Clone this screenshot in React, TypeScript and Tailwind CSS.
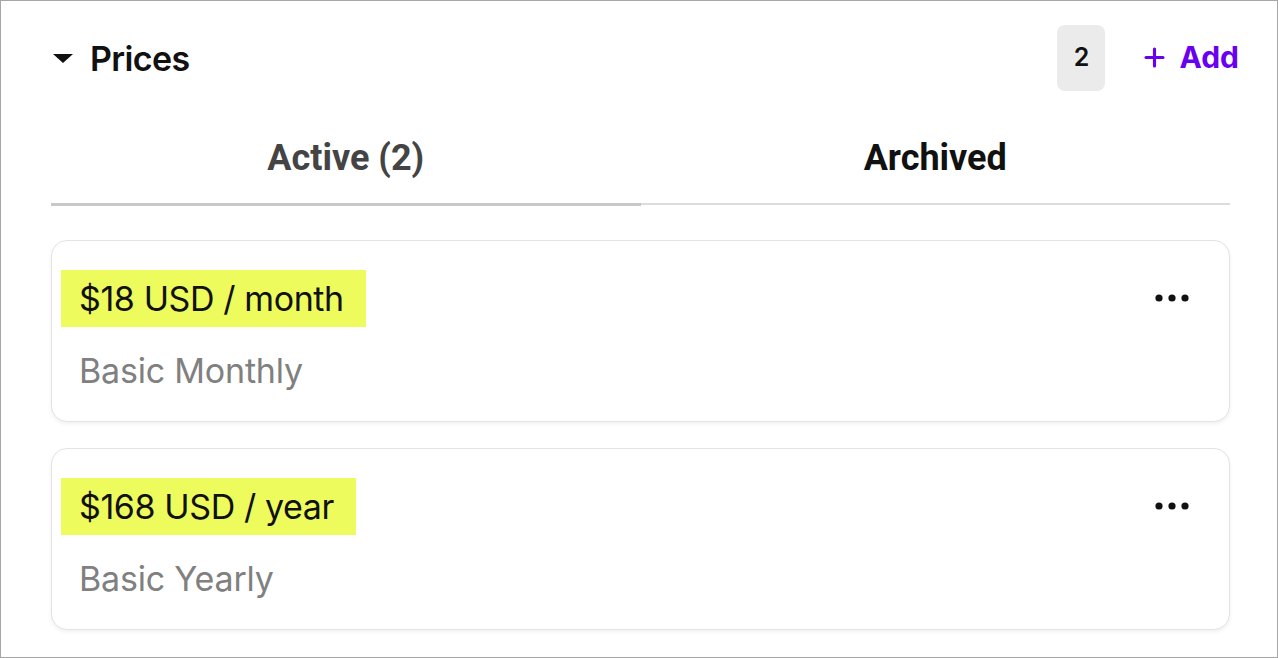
import { Plus } from "lucide-react"

const prices = [
  { id: "monthly", amount: "$18 USD / month", name: "Basic Monthly" },
  { id: "yearly", amount: "$168 USD / year", name: "Basic Yearly" },
]

function Dots() {
  return (
    <svg width="34" height="8" viewBox="0 0 34 8" aria-hidden="true">
      <circle cx="4" cy="4" r="3.6" fill="#111" />
      <circle cx="17" cy="4" r="3.6" fill="#111" />
      <circle cx="30" cy="4" r="3.6" fill="#111" />
    </svg>
  )
}

export default function App() {
  return (
    <div
      className="h-[658px] w-[1278px] overflow-hidden border border-[#a6a6a6] bg-white"
      style={{ fontFamily: "Inter, 'Open Sans', sans-serif" }}
    >
      {/* header */}
      <div className="flex h-[113px] items-center justify-between pl-[52px] pr-[38px] pt-[3px]">
        <div className="flex items-center gap-[17px]">
          <svg width="20" height="10" viewBox="0 0 20 10" aria-hidden="true">
            <path d="M0 0 H20 L10 9 Z" fill="#111" />
          </svg>
          <h2 className="text-[34px] leading-[40px] font-semibold tracking-[-0.6px] text-[#111]">Prices</h2>
        </div>
        <div className="-mt-[3px] flex items-center gap-[35px]">
          <span className="flex h-[66px] w-[48px] items-center justify-center rounded-[8px] bg-[#ebebeb] text-[25px] font-semibold text-[#111]">
            2
          </span>
          <button className="flex items-center gap-[10px] text-[30px] font-bold text-[#6a00f0]">
            <Plus className="size-[29px]" strokeWidth={2.6} />
            Add
          </button>
        </div>
      </div>

      <div className="pl-[50px] pr-[47px]">
        {/* tabs */}
        <div className="grid grid-cols-2 items-start" style={{ fontFamily: "Roboto, sans-serif" }}>
          <button className="flex h-[92px] items-start justify-center border-b-[3px] border-[#c8c8c8] pt-[23px] text-[36px] leading-[42px] font-bold text-[#444]">
            Active (2)
          </button>
          <button className="flex h-[91px] items-start justify-center border-b-[2px] border-[#dcdcdc] pt-[23px] text-[36px] leading-[42px] font-bold text-[#111]">
            Archived
          </button>
        </div>

        {/* price cards */}
        <div className="mt-[34px] flex flex-col gap-[26px]">
          {prices.map((p) => (
            <div
              key={p.id}
              className="flex h-[182px] items-start justify-between rounded-[16px] border border-[#e3e3e3] bg-white pl-[9px] pr-[40px] pt-[29px] shadow-[0_2px_4px_rgba(0,0,0,0.06)]"
            >
              <div className="flex flex-col">
                <span className="self-start bg-[#edfb5c] py-[10px] pl-[18px] pr-[22px] text-[34px] leading-[37px] tracking-[-0.4px] text-[#111]">
                  {p.amount}
                </span>
                <span className="mt-[25px] pl-[18px] text-[34px] leading-[37px] tracking-[-0.2px] text-[#808080]">
                  {p.name}
                </span>
              </div>
              <div className="mt-[24px]">
                <Dots />
              </div>
            </div>
          ))}
        </div>
      </div>
    </div>
  )
}
